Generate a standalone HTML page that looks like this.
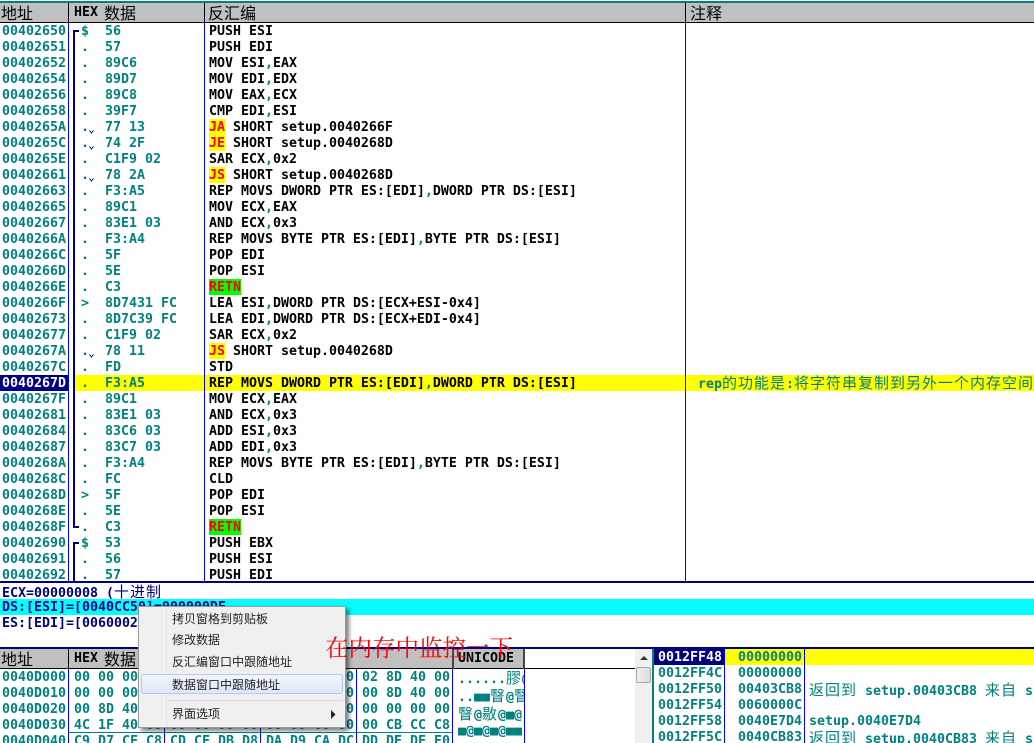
<!DOCTYPE html>
<html><head><meta charset="utf-8"><style>
html,body{margin:0;padding:0;background:#fff;}
#p{position:relative;width:1034px;height:743px;overflow:hidden;background:#fff;font:bold 13.29px/16px "DejaVu Sans Mono","Liberation Mono","Noto Sans CJK SC",monospace;color:#000;}
#p div,#p pre{position:absolute;margin:0;}
pre{font:inherit;white-space:pre;padding-top:1px;}
.t{color:#008080;}
.n{color:#000080;}
.c{font:normal 15px/16px "WenQuanYi Zen Hei","Noto Sans CJK SC",sans-serif;display:inline-block;width:auto;letter-spacing:1px;}
i{font-style:normal;color:#008080;}
.j,.g{color:#f00;}
.h{background:#c0c0c0;}
.hc{font:normal 16px/18px "WenQuanYi Zen Hei","Noto Sans CJK SC",sans-serif;color:#000;}
.m{font:normal 12px/16px "Noto Sans CJK SC",sans-serif;color:#222;left:172px;white-space:nowrap;}
</style></head><body><div id="p">

<div style="left:0;top:1px;width:1034px;height:2px;background:#008080"></div>
<div class="h" style="left:0;top:3px;width:1034px;height:19px"></div>
<div style="left:0;top:22px;width:1034px;height:1px;background:#000"></div>
<div style="left:68px;top:3px;width:1px;height:20px;background:#000"></div>
<div style="left:204px;top:3px;width:1px;height:20px;background:#000"></div>
<div style="left:685px;top:3px;width:1px;height:20px;background:#000"></div>
<div class="hc" style="left:1px;top:3px">地址</div>
<pre style="left:74px;top:4px">HEX</pre>
<div class="hc" style="left:104px;top:3px">数据</div>
<div class="hc" style="left:208px;top:3px">反汇编</div>
<div class="hc" style="left:690px;top:3px">注释</div>

<div style="left:0;top:375px;width:68px;height:16px;background:#000080"></div>
<div style="left:75px;top:375px;width:959px;height:16px;background:#ff0"></div>

<div style="left:68px;top:23px;width:1px;height:558px;background:#00f"></div>
<div style="left:204px;top:23px;width:1px;height:558px;background:#00f"></div>
<div style="left:685px;top:23px;width:1px;height:558px;background:#00f"></div>

<div style="left:73px;top:30px;width:2px;height:498px;background:#000080"></div>
<div style="left:73px;top:30px;width:6px;height:2px;background:#000080"></div>
<div style="left:73px;top:526px;width:6px;height:2px;background:#000080"></div>
<div style="left:73px;top:542px;width:2px;height:39px;background:#000080"></div>
<div style="left:73px;top:542px;width:6px;height:2px;background:#000080"></div>

<svg style="position:absolute;left:0;top:0" width="1034" height="581" fill="none" stroke="#000080" stroke-width="1"><path d="M89.5 130.5l2 2.500 2-2.500M89.500 146.500l2 2.500 2-2.500M89.500 178.500l2 2.500 2-2.500M89.500 354.500l2 2.500 2-2.500"/></svg>

<div style="left:209px;top:119px;width:16px;height:16px;background:#ff0"></div>
<div style="left:209px;top:135px;width:16px;height:16px;background:#ff0"></div>
<div style="left:209px;top:167px;width:16px;height:16px;background:#ff0"></div>
<div style="left:209px;top:343px;width:16px;height:16px;background:#ff0"></div>
<div style="left:209px;top:279px;width:32px;height:16px;background:#0f0"></div>
<div style="left:209px;top:519px;width:32px;height:16px;background:#0f0"></div>

<div style="left:0;top:23px;width:1034px;height:558px;overflow:hidden">
<pre class="t" style="left:2px;top:0">00402650
00402651
00402652
00402654
00402656
00402658
0040265A
0040265C
0040265E
00402661
00402663
00402665
00402667
0040266A
0040266C
0040266D
0040266E
0040266F
00402673
00402677
0040267A
0040267C
<span style="color:#fff">0040267D</span>
0040267F
00402681
00402684
00402687
0040268A
0040268C
0040268D
0040268E
0040268F
00402690
00402691
00402692</pre>
<pre class="t" style="left:81px;top:0">$
.
.
.
.
.
.
.
.
.
.
.
.
.
.
.
.
&gt;
.
.
.
.
.
.
.
.
.
.
.
&gt;
.
.
$
.
.</pre>
<pre class="t" style="left:105px;top:0">56
57
89C6
89D7
89C8
39F7
77 13
74 2F
C1F9 02
78 2A
F3:A5
89C1
83E1 03
F3:A4
5F
5E
C3
8D7431 FC
8D7C39 FC
C1F9 02
78 11
FD
F3:A5
89C1
83E1 03
83C6 03
83C7 03
F3:A4
FC
5F
5E
C3
53
56
57</pre>
<pre style="left:209px;top:0">PUSH ESI
PUSH EDI
MOV ESI<i>,</i>EAX
MOV EDI<i>,</i>EDX
MOV EAX<i>,</i>ECX
CMP EDI<i>,</i>ESI
<span class="j">JA</span> SHORT setup.0040266F
<span class="j">JE</span> SHORT setup.0040268D
SAR ECX<i>,</i>0x2
<span class="j">JS</span> SHORT setup.0040268D
REP MOVS DWORD PTR ES:[EDI]<i>,</i>DWORD PTR DS:[ESI]
MOV ECX<i>,</i>EAX
AND ECX<i>,</i>0x3
REP MOVS BYTE PTR ES:[EDI]<i>,</i>BYTE PTR DS:[ESI]
POP EDI
POP ESI
<span class="g">RETN</span>
LEA ESI<i>,</i>DWORD PTR DS:[ECX+ESI-0x4]
LEA EDI<i>,</i>DWORD PTR DS:[ECX+EDI-0x4]
SAR ECX<i>,</i>0x2
<span class="j">JS</span> SHORT setup.0040268D
STD
REP MOVS DWORD PTR ES:[EDI]<i>,</i>DWORD PTR DS:[ESI]
MOV ECX<i>,</i>EAX
AND ECX<i>,</i>0x3
ADD ESI<i>,</i>0x3
ADD EDI<i>,</i>0x3
REP MOVS BYTE PTR ES:[EDI]<i>,</i>BYTE PTR DS:[ESI]
CLD
POP EDI
POP ESI
<span class="g">RETN</span>
PUSH EBX
PUSH ESI
PUSH EDI</pre>
</div>
<div style="left:698px;top:375px;width:336px;height:16px;overflow:hidden;color:#008080;white-space:nowrap">rep<span class="c">的功能是</span>:<span class="c">将字符串复制到另外一个内存空间</span></div>

<div style="left:0;top:581px;width:1034px;height:2px;background:#000080"></div>
<div style="left:0;top:599px;width:1034px;height:16px;background:#0ff"></div>
<pre class="n" style="left:2px;top:583px">ECX=00000008 (<span class="c">十进制</span></pre>
<pre class="n" style="left:2px;top:599px">DS:[ESI]=[0040CC50]=000000DF</pre>
<pre class="n" style="left:2px;top:615px">ES:[EDI]=[00600020]</pre>
<div style="left:0;top:647px;width:1034px;height:2px;background:#000080"></div>

<div class="h" style="left:0;top:649px;width:524px;height:19px"></div>
<div style="left:0;top:668px;width:635px;height:1px;background:#000"></div>
<div style="left:68px;top:649px;width:1px;height:20px;background:#000"></div>
<div style="left:452px;top:649px;width:2px;height:20px;background:#444"></div>
<div style="left:523px;top:649px;width:2px;height:20px;background:#444"></div>
<div class="hc" style="left:1px;top:649px">地址</div>
<pre style="left:74px;top:650px">HEX</pre>
<div class="hc" style="left:104px;top:649px">数据</div>
<pre style="left:458px;top:650px">UNICODE</pre>

<div style="left:0;top:669px;width:635px;height:74px;overflow:hidden">
<div style="left:68px;top:0;width:1px;height:74px;background:#00f"></div>
<div style="left:164px;top:0;width:1px;height:74px;background:#00f"></div>
<div style="left:260px;top:0;width:1px;height:74px;background:#00f"></div>
<div style="left:356px;top:0;width:1px;height:74px;background:#00f"></div>
<div style="left:452px;top:0;width:1px;height:74px;background:#00f"></div>
<div style="left:524px;top:0;width:1px;height:74px;background:#00f"></div>
<div style="left:68px;top:63px;width:384px;height:1px;background:#008080"></div>
<pre class="t" style="left:2px;top:0">0040D000
0040D010
0040D020
0040D030
0040D040</pre>
<pre class="t" style="left:74px;top:0">00 00 00 00
00 00 00 00
00 8D 40 00
4C 1F 40 00
C9 D7 CF C8</pre>
<pre class="t" style="left:170px;top:0">00 00 00 00
00 00 00 00
00 00 00 00
00 00 00 00
CD CF DB D8</pre>
<pre class="t" style="left:266px;top:0">00 00 00 00
00 00 00 00
00 00 00 00
00 00 00 00
DA D9 CA DC</pre>
<pre class="t" style="left:362px;top:0">02 8D 40 00
00 8D 40 00
00 00 00 00
00 CB CC C8
DD DE DF E0</pre>
<div style="left:453px;top:0;width:71px;height:74px;overflow:hidden">
<pre class="t" style="left:5px;top:0">......<span class="c">膠</span>@
..■■<span class="c">瞖</span>@<span class="c">瞖</span>
<span class="c">瞖</span>@<span class="c">敭</span>@■@
■@■@■@■■
■■■■■■■■<span class="c">紌</span></pre>
</div>
</div>

<div style="left:635px;top:649px;width:17px;height:94px;background:#f0f0f0"></div>
<svg style="position:absolute;left:640px;top:655px" width="8" height="6"><path d="M0 5L4 1L8 5Z" fill="#333"/></svg>
<div style="left:636px;top:667px;width:13px;height:14px;background:linear-gradient(90deg,#eee,#dcdcdc);border:1px solid #aaa;border-radius:2px"></div>

<div style="left:652px;top:649px;width:2px;height:94px;background:#008080"></div>
<div style="left:654px;top:649px;width:70px;height:16px;background:#000080"></div>
<div style="left:725px;top:649px;width:309px;height:16px;background:#ff0"></div>
<div style="left:724px;top:649px;width:1px;height:94px;background:#00f"></div>
<div style="left:804px;top:649px;width:1px;height:94px;background:#00f"></div>
<pre class="t" style="left:658px;top:649px"><span style="color:#fff">0012FF48</span>
0012FF4C
0012FF50
0012FF54
0012FF58
0012FF5C</pre>
<pre class="t" style="left:738px;top:649px">00000000
00000000
00403CB8
0060000C
0040E7D4
0040CB83</pre>
<pre class="t" style="left:809px;top:681px"><span class="c">返回到</span> setup.00403CB8 <span class="c">来自</span> s</pre>
<pre class="t" style="left:809px;top:713px">setup.0040E7D4</pre>
<pre class="t" style="left:809px;top:729px"><span class="c">返回到</span> setup.0040CB83 <span class="c">来自</span> s</pre>

<div style="left:138px;top:606px;width:208px;height:122px;background:#f0f0f0;border:1px solid #999;box-sizing:border-box;box-shadow:3px 3px 4px rgba(0,0,0,.5)"></div>
<div style="left:166px;top:608px;width:1px;height:118px;background:#e2e2e2"></div>
<div style="left:141px;top:674px;width:202px;height:20px;box-sizing:border-box;border:1px solid #aeccf0;border-radius:3px;background:linear-gradient(#f2f6fb,#dde8f6)"></div>
<div style="left:168px;top:700px;width:175px;height:1px;background:#d7d7d7"></div>
<div class="m" style="top:611px">拷贝窗格到剪贴板</div>
<div class="m" style="top:632px">修改数据</div>
<div class="m" style="top:654px">反汇编窗口中跟随地址</div>
<div class="m" style="top:677px">数据窗口中跟随地址</div>
<div class="m" style="top:706px">界面选项</div>
<svg style="position:absolute;left:331px;top:710px" width="5" height="9"><path d="M0 0L4.500 4.500L0 9Z" fill="#222"/></svg>

<div style="left:325px;top:632px;font:normal 23.500px/28px 'Noto Serif CJK SC',serif;color:#f00;white-space:nowrap">在内存中监控一下</div>

</div></body></html>
